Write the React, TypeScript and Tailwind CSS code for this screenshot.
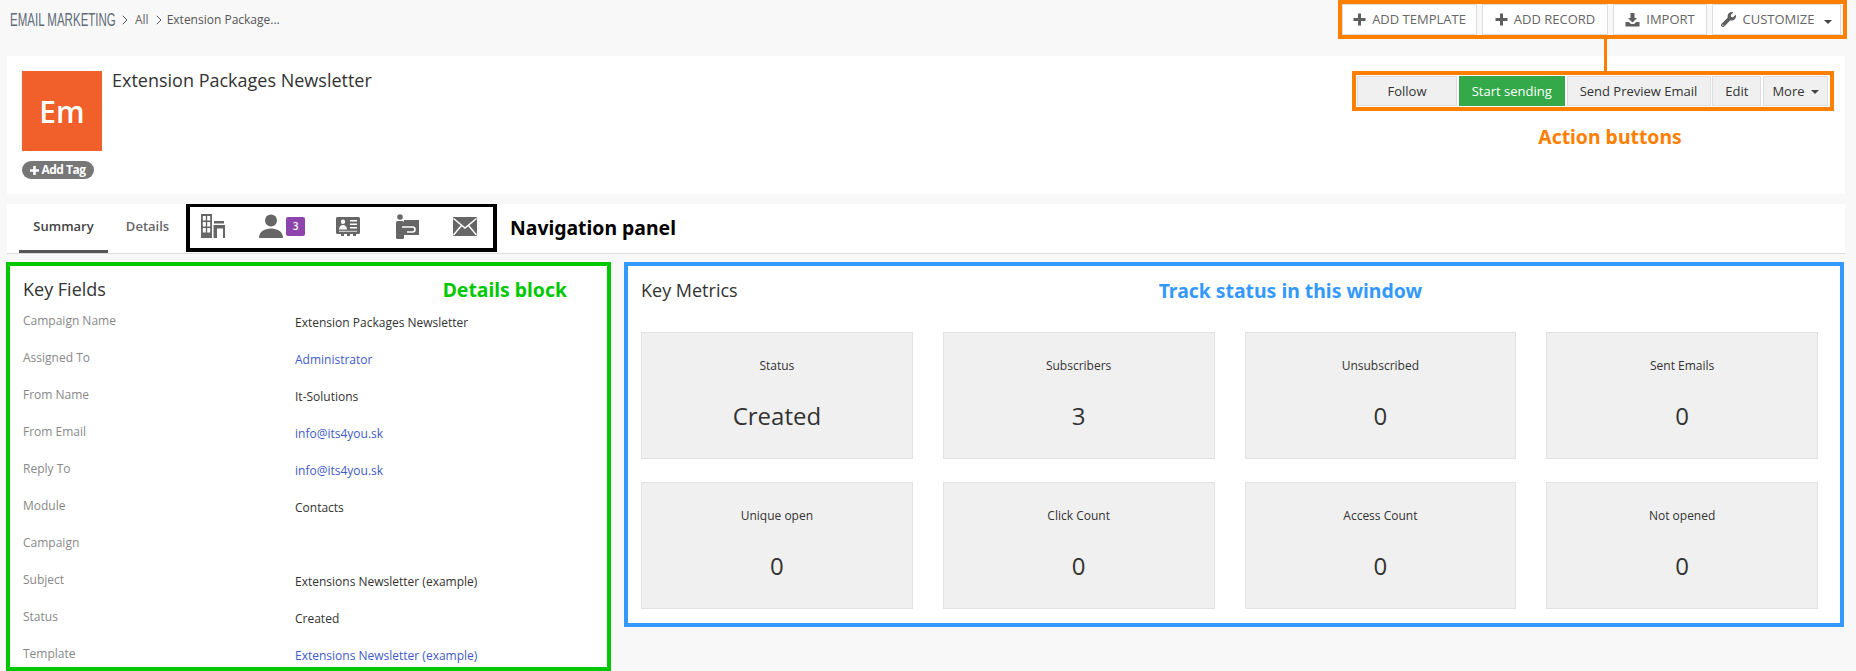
import React from "react";
import { FaWrench } from "react-icons/fa";

const G = "#666666";

function Plus() {
  return (
    <svg width="13" height="13" viewBox="0 0 13 13" className="shrink-0">
      <path d="M5 0.500h3V5h4.500v3H8v4.500H5V8H0.500V5H5z" fill="#5f5f5f" />
    </svg>
  );
}
function Download() {
  return (
    <svg width="15" height="14" viewBox="0 0 15 14" className="shrink-0">
      <path d="M5.500 0h4v5H12L7.500 9.500 3 5h2.500z" fill="#5f5f5f" />
      <path d="M0.500 9h3.200l2.300 2h3l2.300-2h3.200v4.500H0.500z" fill="#5f5f5f" />
    </svg>
  );
}
function Caret() {
  return <span className="inline-block w-0 h-0 border-x-[4px] border-x-transparent border-t-[4px] border-t-[#444444]" />;
}
function Chevron() {
  return (
    <svg width="6" height="10" viewBox="0 0 6 10" className="shrink-0">
      <path d="M0.800 0.800L5 5 0.800 9.200" stroke="#555555" strokeWidth="1" fill="none" />
    </svg>
  );
}

function Building() {
  return (
    <svg width="24" height="24" viewBox="0 0 24 24">
      <path fillRule="evenodd" fill={G} d="M0 0h11v24H0zM1.800 2v4.500h3V2zM6.200 2v4.500h3V2zM1.800 8v4.500h3V8zM6.200 8v4.500h3V8zM1.800 14v4.500h3V14zM6.200 14v4.500h3V14z" />
      <rect x="13" y="7" width="10" height="2.500" fill={G} />
      <path fill={G} d="M12.500 11H24v13h-2V14.500h-6V24h-3.500z" />
    </svg>
  );
}
function Person() {
  return (
    <svg width="24" height="24" viewBox="0 0 24 24">
      <circle cx="12" cy="6.500" r="6" fill={G} />
      <path d="M0 24c0-6 5-9.500 12-9.500S24 18 24 24z" fill={G} />
    </svg>
  );
}
function Card() {
  return (
    <svg width="24" height="19" viewBox="0 0 24 19">
      <path fillRule="evenodd" fill={G} d="M1.500 0h21A1.500 1.500 0 0 1 24 1.500v14a1.500 1.500 0 0 1-1.500 1.500H20v2h-3v-2h-3v2h-3v-2H8v2H5v-2H1.500A1.500 1.500 0 0 1 0 15.500v-14A1.500 1.500 0 0 1 1.500 0zM7 2.500a2.200 2.200 0 1 0 0 4.400A2.200 2.200 0 0 0 7 2.500zM3 12.500h8c0-2.500-1.700-4.500-4-4.500S3 10 3 12.500zM14 3v1.600h7V3zM14 6.500v1.600h7V6.500zM14 10v1.600h7V10z" />
      <path d="M3 14.300h18" stroke="#ffffff" strokeWidth="0.800" />
    </svg>
  );
}
function Presenter() {
  return (
    <svg width="24" height="25" viewBox="0 0 24 25">
      <circle cx="5" cy="3" r="2.800" fill={G} />
      <rect x="1" y="7" width="8" height="18" rx="1.500" fill={G} />
      <rect x="9" y="6" width="15" height="15" fill={G} />
      <path d="M7 13h10.500a2.500 2.500 0 0 1 0 5H12" stroke="#ffffff" strokeWidth="1.600" fill="none" />
    </svg>
  );
}
function Mail() {
  return (
    <svg width="24" height="19" viewBox="0 0 24 19">
      <rect width="24" height="19" rx="1" fill={G} />
      <path d="M0.500 1.500L12 11 23.500 1.500M0.500 18L8.500 8.500M23.500 18L15.500 8.500" stroke="#ffffff" strokeWidth="1.500" fill="none" />
    </svg>
  );
}

const fields: [string, string, boolean][] = [
  ["Campaign Name", "Extension Packages Newsletter", false],
  ["Assigned To", "Administrator", true],
  ["From Name", "It-Solutions", false],
  ["From Email", "info@its4you.sk", true],
  ["Reply To", "info@its4you.sk", true],
  ["Module", "Contacts", false],
  ["Campaign", "", false],
  ["Subject", "Extensions Newsletter (example)", false],
  ["Status", "Created", false],
  ["Template", "Extensions Newsletter (example)", true],
];

const metrics = [
  ["Status", "Created"],
  ["Subscribers", "3"],
  ["Unsubscribed", "0"],
  ["Sent Emails", "0"],
  ["Unique open", "0"],
  ["Click Count", "0"],
  ["Access Count", "0"],
  ["Not opened", "0"],
];

const topBtn = "h-[31px] bg-white border border-[#dddddd] flex items-center justify-center gap-[6px] text-[13px] text-[#666666] uppercase";
const actBtn = "h-[30px] bg-[#f0f0f0] border border-[#dddddd] flex items-center justify-center pt-[1px] text-[13px] text-[#333333]";
const note = "font-['Noto_Sans',sans-serif] font-bold text-[19.400px] leading-[24px] whitespace-nowrap";

export default function App() {
  return (
    <div className="relative w-[1856px] h-[671px] overflow-hidden bg-[#f8f8f8] font-['Open_Sans',sans-serif]">
      {/* connector between the two orange frames */}
      <div className="absolute left-[1604px] top-[39px] w-[3px] h-[32px] bg-[#ff8000]" />

      {/* header */}
      <div className="h-[56px] flex justify-between items-start pl-[10px] pr-[9px]">
        <div className="flex items-center h-[40px] text-[12px] text-[#555555]">
          <span className="w-[106px] inline-block whitespace-nowrap origin-left scale-x-[0.64] font-['Liberation_Sans',sans-serif] text-[18px] text-[#5f6d7a] mr-[6px]">EMAIL MARKETING</span>
          <Chevron />
          <span className="ml-[7px] mr-[7px] text-[#666666]">All</span>
          <Chevron />
          <span className="ml-[5px]">Extension Package...</span>
        </div>
        <div className="h-[39px] border-4 border-[#ff8000] flex gap-[5px] w-[509px] bg-[#f8f8f8]">
          <div className={topBtn + " w-[135px]"}><Plus />Add Template</div>
          <div className={topBtn + " w-[126px]"}><Plus />Add Record</div>
          <div className={topBtn + " w-[94px]"}><Download />Import</div>
          <div className={topBtn + " w-[129px] gap-[3px]"}><span className="text-[#5f5f5f] text-[15px]"><FaWrench /></span>Customize<span className="ml-[3px]"><Caret /></span></div>
        </div>
      </div>

      {/* record header */}
      <div className="ml-[7px] mr-[11px] h-[138px] bg-white flex justify-between">
        <div className="pl-[15px] pt-[15px] flex items-start">
          <div>
            <div className="w-[80px] h-[80px] bg-[#f1602a] flex items-center justify-center text-white text-[30px] font-semibold">Em</div>
            <div className="mt-[10px] w-[72px] h-[18px] rounded-full bg-[#777777] flex items-center justify-center gap-[2px] text-white text-[12px] font-bold tracking-[-0.500px]">
              <svg width="9" height="9" viewBox="0 0 9 9"><path d="M3.200 0h2.600v3.200H9v2.600H5.800V9H3.200V5.800H0V3.200h3.200z" fill="#ffffff" /></svg>
              Add Tag
            </div>
          </div>
          <div className="ml-[10px] -mt-[4px] text-[18px] leading-[26px] text-[#333333]">Extension Packages Newsletter</div>
        </div>
        <div className="mr-[11px] mt-[15px] flex flex-col items-center">
          <div className="w-[482px] h-[40px] border-4 border-[#ff8000] flex items-center justify-between px-[1px]">
            <div className={actBtn + " w-[100px]"}>Follow</div>
            <div className="h-[30px] w-[106px] bg-[#34a94a] text-white flex items-center justify-center pt-[1px] text-[13px]">Start sending</div>
            <div className={actBtn + " w-[144px]"}>Send Preview Email</div>
            <div className={actBtn + " w-[49px]"}>Edit</div>
            <div className={actBtn + " w-[65px] gap-[6px] mr-[1px]"}>More <Caret /></div>
          </div>
          <div className={note + " mt-[14px] ml-[34px] text-[#ff8000]"}>Action buttons</div>
        </div>
      </div>

      {/* tabs */}
      <div className="mt-[10px] ml-[7px] mr-[11px] h-[50px] bg-white border-b border-[#dddddd] flex items-start">
        <div className="w-[89px] ml-[12px] h-[49px] border-b-[3px] border-[#555555] flex items-center justify-center text-[13px] font-semibold text-[#444444]">Summary</div>
        <div className="w-[67px] ml-[6px] h-[46px] flex items-center justify-center text-[13px] font-semibold text-[#666666]">Details</div>
        <div className="ml-[5px] w-[311px] h-[48px] border-4 border-t-[3px] border-black flex items-center pb-[3px]">
          <div className="ml-[11px]"><Building /></div>
          <div className="ml-[34px]"><Person /></div>
          <div className="ml-[3px] w-[19px] h-[19px] rounded-[2px] bg-[#8e44ad] text-white text-[10px] font-semibold flex items-center justify-center">3</div>
          <div className="ml-[31px]"><Card /></div>
          <div className="ml-[35px]"><Presenter /></div>
          <div className="ml-[34px]"><Mail /></div>
        </div>
        <div className={note + " ml-[13px] mt-[12px] text-black"}>Navigation panel</div>
      </div>

      {/* body */}
      <div className="mt-[8px] ml-[6px] mr-[12px] flex items-start gap-[13px]">
        <div className="w-[605px] h-[409px] overflow-hidden border-4 border-[#00c800] bg-white pl-[13px] pr-[40px]">
          <div className="flex justify-between items-center h-[46px]">
            <span className="text-[18px] text-[#333333]">Key Fields</span>
            <span className={note + " mt-[1px] text-[#00c800]"}>Details block</span>
          </div>
          {fields.map(([label, value, link]) => (
            <div key={label} className="flex h-[37px] text-[12px]">
              <div className="w-[272px] text-[#888888] leading-[16px] pt-[1px]">{label}</div>
              <div className={(link ? "text-[#3f5bc8]" : "text-[#333333]") + " leading-[16px] pt-[3px]"}>{value}</div>
            </div>
          ))}
        </div>

        <div className="w-[1220px] h-[365px] border-4 border-[#3399ff] bg-white px-[13px]">
          <div className="flex items-center h-[48px]">
            <span className="text-[18px] text-[#333333]">Key Metrics</span>
            <span className={note + " ml-[421px] mt-[2px] text-[#3399ff]"}>Track status in this window</span>
          </div>
          <div className="mt-[18px] grid grid-cols-4 gap-x-[30px] gap-y-[23px] w-[1177px]">
            {metrics.map(([title, value]) => (
              <div key={title} className="h-[127px] bg-[#f0f0f0] border border-[#e2e2e2] flex flex-col items-center text-[#333333]">
                <div className="mt-[25px] text-[12px] leading-[16px]">{title}</div>
                <div className="mt-[24px] text-[24px] leading-[36px]">{value}</div>
              </div>
            ))}
          </div>
        </div>
      </div>
    </div>
  );
}
